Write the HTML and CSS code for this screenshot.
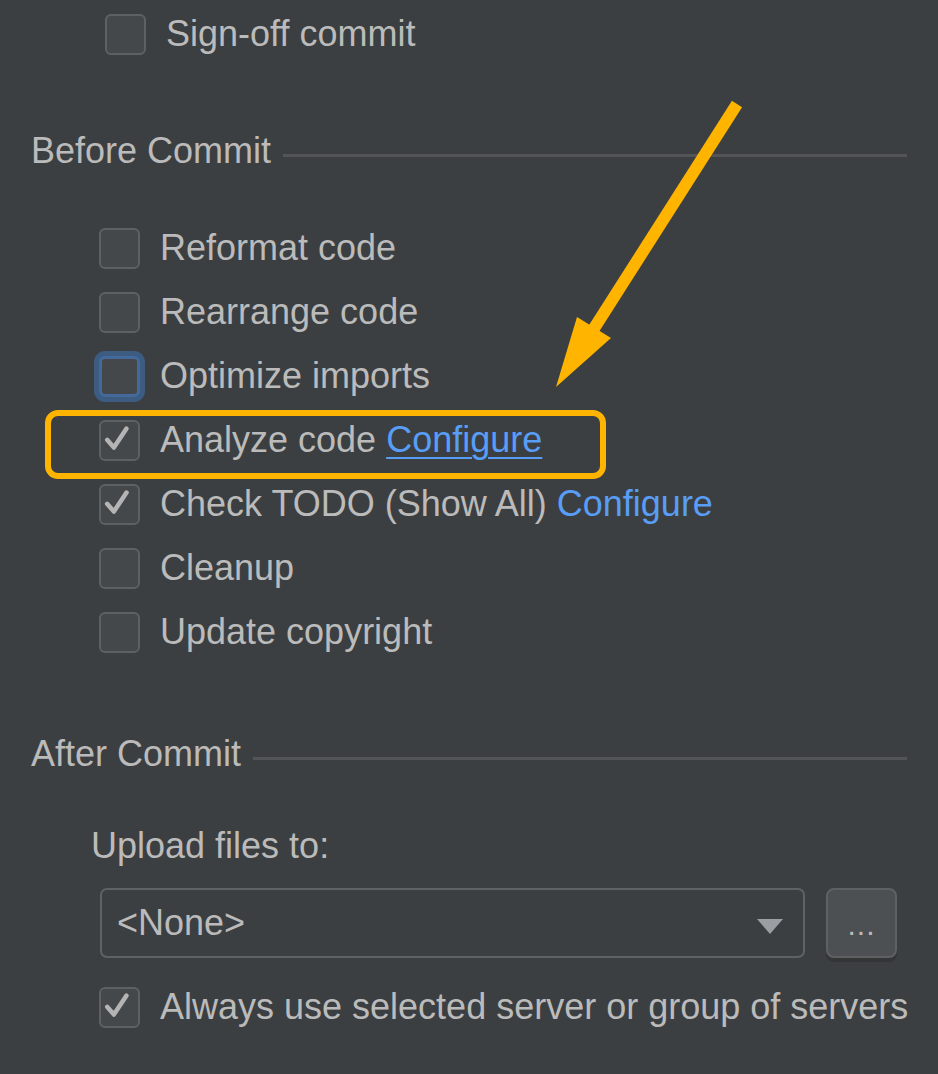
FILE: index.html
```html
<!DOCTYPE html>
<html lang="en">
<head>
    <meta charset="UTF-8">
    <title>Commit Options</title>
    <link rel="stylesheet" href="styles.css">
</head>
<body>
    <div class="page">
        <div class="row row-top">
            <span class="box"></span>
            <span>Sign-off commit</span>
        </div>

        <section class="group">
            <div class="group-title"><span>Before Commit</span><span class="rule"></span></div>
            <div class="options">
                <div class="row"><span class="box"></span><span>Reformat code</span></div>
                <div class="row"><span class="box"></span><span>Rearrange code</span></div>
                <div class="row"><span class="box focused"></span><span>Optimize imports</span></div>
                <div class="row">
                    <span class="box checked"><svg viewBox="0 0 41 41"><path d="M9 22 L16.5 30.5 L30.5 9.5" /></svg></span>
                    <span>Analyze code <a class="link underlined">Configure</a></span>
                </div>
                <div class="row">
                    <span class="box checked"><svg viewBox="0 0 41 41"><path d="M9 22 L16.5 30.5 L30.5 9.5" /></svg></span>
                    <span>Check TODO (Show All) <a class="link">Configure</a></span>
                </div>
                <div class="row"><span class="box"></span><span>Cleanup</span></div>
                <div class="row"><span class="box"></span><span>Update copyright</span></div>
            </div>
        </section>

        <section class="group group-after">
            <div class="group-title"><span>After Commit</span><span class="rule"></span></div>
            <div class="upload-label">Upload files to:</div>
            <div class="upload-row">
                <div class="select">
                    <span>&lt;None&gt;</span>
                    <span class="caret"></span>
                </div>
                <div class="more-btn">...</div>
            </div>
            <div class="row row-always">
                <span class="box checked"><svg viewBox="0 0 41 41"><path d="M9 22 L16.5 30.5 L30.5 9.5" /></svg></span>
                <span>Always use selected server or group of servers</span>
            </div>
        </section>

        <!-- annotation layer -->
        <svg class="annotations" width="938" height="1074" viewBox="0 0 938 1074">
            <rect x="48" y="413" width="555" height="63" rx="10" ry="10" fill="none" stroke="#ffb400" stroke-width="6" />
            <line x1="737" y1="104" x2="593" y2="330" stroke="#ffb400" stroke-width="12" />
            <polygon points="556,387 577,317 611,338" fill="#ffb400" />
        </svg>
    </div>
</body>
</html>
```

FILE: styles.css
```css
body {
    margin: 0;
    background: #3c3f41;
    font-family: "Liberation Sans", Arial, Helvetica, sans-serif;
    font-size: 36px;
    color: #bbbbbb;
}

.page {
    position: relative;
    width: 938px;
    height: 1074px;
    box-sizing: border-box;
    padding: 2px 31px 0 31px;
    overflow: hidden;
}

.row {
    display: flex;
    align-items: center;
    gap: 20px;
    height: 64px;
    white-space: nowrap;
}

.row-top {
    padding-left: 74px;
}

.box {
    flex: none;
    width: 41px;
    height: 41px;
    box-sizing: border-box;
    border: 2px solid #5e6162;
    border-radius: 6px;
    background: #44484a;
    display: flex;
}

.box svg {
    width: 100%;
    height: 100%;
    margin: -2px;
}

.box svg path {
    fill: none;
    stroke: #b4b4b4;
    stroke-width: 5;
    stroke-linecap: round;
    stroke-linejoin: round;
}

.box.focused {
    border: 3px solid #44699a;
    box-shadow: 0 0 0 5px #3c5c82;
}

.group-title {
    display: flex;
    align-items: center;
    height: 40px;
    margin-top: 65px;
}

.group-title .rule {
    flex: 1;
    height: 3px;
    margin: 8px 0 0 12px;
    background: #525455;
}

.options {
    margin-top: 45px;
    padding-left: 68px;
}

.link {
    color: #589df6;
}

.underlined {
    text-decoration: underline;
    text-decoration-thickness: 2px;
    text-underline-offset: 5px;
}

.group-after {
    padding-top: 5px;
}

.upload-label {
    margin-top: 52px;
    padding-left: 60px;
    height: 40px;
    line-height: 40px;
}

.upload-row {
    display: flex;
    gap: 21px;
    margin-top: 22px;
    padding: 0 10px 0 69px;
}

.select {
    flex: 1;
    height: 70px;
    box-sizing: border-box;
    border: 2px solid #5f6263;
    border-radius: 7px;
    background: #3c3f41;
    display: flex;
    align-items: center;
    justify-content: space-between;
    padding: 0 20px 0 15px;
}

.caret {
    width: 0;
    height: 0;
    border-left: 13px solid transparent;
    border-right: 13px solid transparent;
    border-top: 15px solid #9b9fa3;
    margin-top: 6px;
}

.more-btn {
    width: 71px;
    height: 70px;
    box-sizing: border-box;
    border: 2px solid #5e6162;
    border-radius: 8px;
    background: #4c5052;
    box-shadow: 0 4px 0 #333537;
    text-align: center;
    line-height: 70px;
    font-size: 30px;
    letter-spacing: 1px;
}

.row-always {
    margin-top: 17px;
    padding-left: 68px;
}

.annotations {
    position: absolute;
    left: 0;
    top: 0;
    pointer-events: none;
}
```
